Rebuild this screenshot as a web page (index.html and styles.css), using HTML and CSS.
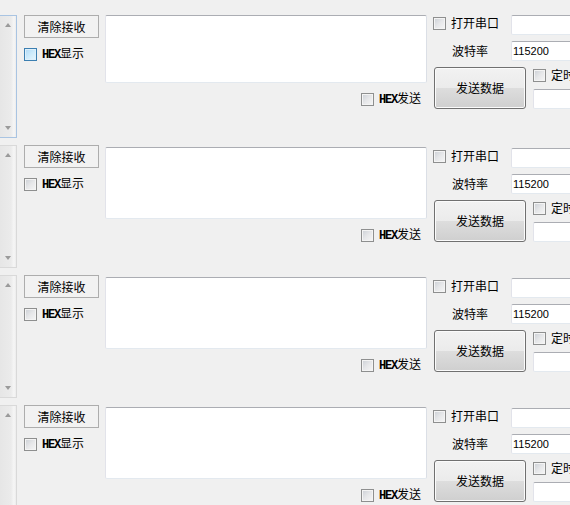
FILE: index.html
```html
<!DOCTYPE html>
<html lang="zh-CN">
<head>
<meta charset="utf-8">
<title>串口调试</title>
<link rel="stylesheet" href="styles.css">
</head>
<body>
<div class="form">

  <div class="panel compact">
    <div class="vscroll focus"><span class="arr up"></span><span class="arr down"></span></div>
    <div class="col-left">
      <button class="btn-flat">清除接收</button>
      <label class="chk"><span class="cb hot"></span><span class="lbl"><span class="hex">HEX</span>显示</span></label>
    </div>
    <div class="col-mid">
      <div class="memo"></div>
      <label class="chk"><span class="cb"></span><span class="lbl"><span class="hex">HEX</span>发送</span></label>
    </div>
    <div class="col-right">
      <div class="row r1"><label class="chk"><span class="cb"></span><span class="lbl">打开串口</span></label><div class="edit"></div></div>
      <div class="row r2"><span class="cap">波特率</span><div class="edit">115200</div></div>
      <div class="row r3"><button class="btn-send">发送数据</button>
        <div class="timer"><label class="chk"><span class="cb"></span><span class="lbl">定时</span></label><div class="edit"></div></div>
      </div>
    </div>
  </div>

  <div class="panel">
    <div class="vscroll"><span class="arr up"></span><span class="arr down"></span></div>
    <div class="col-left">
      <button class="btn-flat">清除接收</button>
      <label class="chk"><span class="cb"></span><span class="lbl"><span class="hex">HEX</span>显示</span></label>
    </div>
    <div class="col-mid">
      <div class="memo"></div>
      <label class="chk"><span class="cb"></span><span class="lbl"><span class="hex">HEX</span>发送</span></label>
    </div>
    <div class="col-right">
      <div class="row r1"><label class="chk"><span class="cb"></span><span class="lbl">打开串口</span></label><div class="edit"></div></div>
      <div class="row r2"><span class="cap">波特率</span><div class="edit">115200</div></div>
      <div class="row r3"><button class="btn-send">发送数据</button>
        <div class="timer"><label class="chk"><span class="cb"></span><span class="lbl">定时</span></label><div class="edit"></div></div>
      </div>
    </div>
  </div>

  <div class="panel">
    <div class="vscroll"><span class="arr up"></span><span class="arr down"></span></div>
    <div class="col-left">
      <button class="btn-flat">清除接收</button>
      <label class="chk"><span class="cb"></span><span class="lbl"><span class="hex">HEX</span>显示</span></label>
    </div>
    <div class="col-mid">
      <div class="memo"></div>
      <label class="chk"><span class="cb"></span><span class="lbl"><span class="hex">HEX</span>发送</span></label>
    </div>
    <div class="col-right">
      <div class="row r1"><label class="chk"><span class="cb"></span><span class="lbl">打开串口</span></label><div class="edit"></div></div>
      <div class="row r2"><span class="cap">波特率</span><div class="edit">115200</div></div>
      <div class="row r3"><button class="btn-send">发送数据</button>
        <div class="timer"><label class="chk"><span class="cb"></span><span class="lbl">定时</span></label><div class="edit"></div></div>
      </div>
    </div>
  </div>

  <div class="panel">
    <div class="vscroll"><span class="arr up"></span><span class="arr down"></span></div>
    <div class="col-left">
      <button class="btn-flat">清除接收</button>
      <label class="chk"><span class="cb"></span><span class="lbl"><span class="hex">HEX</span>显示</span></label>
    </div>
    <div class="col-mid">
      <div class="memo"></div>
      <label class="chk"><span class="cb"></span><span class="lbl"><span class="hex">HEX</span>发送</span></label>
    </div>
    <div class="col-right">
      <div class="row r1"><label class="chk"><span class="cb"></span><span class="lbl">打开串口</span></label><div class="edit"></div></div>
      <div class="row r2"><span class="cap">波特率</span><div class="edit">115200</div></div>
      <div class="row r3"><button class="btn-send">发送数据</button>
        <div class="timer"><label class="chk"><span class="cb"></span><span class="lbl">定时</span></label><div class="edit"></div></div>
      </div>
    </div>
  </div>

</div>
</body>
</html>
```
FILE: styles.css
```css
html, body {
  margin: 0;
  height: 100%;
  overflow: hidden;
}
body {
  background: #f0f0f0;
  color: #000;
  font: 12px/14px "Noto Sans CJK SC", "Liberation Sans", sans-serif;
}
.form {
  padding-top: 15px;
}
.panel {
  display: flex;
  align-items: flex-start;
  height: 130px;
  flex-shrink: 0;
}

/* scrollbar stub */
.vscroll {
  width: 16px;
  height: 107px;
  padding: 7px 0;
  border: 1px solid #d9d9d9;
  border-left: 0;
  background: linear-gradient(90deg, #e6e6e6 0, #ebebeb 11px, #f6f6f6 14px, #ececec 16px);
  display: flex;
  flex-direction: column;
  justify-content: space-between;
  align-items: center;
  flex-shrink: 0;
}
.vscroll.focus {
  border-color: #a9c4e2;
}
.arr {
  width: 0;
  height: 0;
  border-left: 3px solid transparent;
  border-right: 3px solid transparent;
}
.arr.up {
  border-bottom: 4px solid #9a9a9a;
}
.arr.down {
  border-top: 4px solid #9a9a9a;
}

/* left column */
.col-left {
  margin-left: 7px;
  width: 75px;
  flex-shrink: 0;
}
.btn-flat {
  display: block;
  width: 75px;
  height: 23px;
  padding: 0;
  box-sizing: border-box;
  border: 1px solid #adadad;
  background: #f2f2f2;
  font: inherit;
  line-height: 20px;
  color: #000;
}
.col-left .chk {
  margin-top: 8px;
}

/* checkbox */
.chk {
  display: flex;
  align-items: center;
  gap: 5px;
  white-space: nowrap;
}
.cb {
  display: block;
  width: 13px;
  height: 13px;
  box-sizing: border-box;
  border: 1px solid #8e8f8f;
  background: linear-gradient(135deg, #cbcfd5 0, #e6e7e9 50%, #f6f6f6 100%);
  box-shadow: inset 0 0 0 1px #f4f4f4;
  flex-shrink: 0;
}
.cb.hot {
  border-color: #3c7fb1;
  background: linear-gradient(135deg, #aed8f6 0, #cdebfb 50%, #e8f6fe 100%);
  box-shadow: inset 0 0 0 1px #def0fb;
}
.lbl {
  line-height: 14px;
}
.hex {
  font: bold 12px/14px "Liberation Mono", monospace;
  letter-spacing: -1.2px;
}

/* middle column */
.col-mid {
  margin-left: 6px;
  width: 322px;
  flex-shrink: 0;
}
.memo {
  margin-top: 2px;
  height: 72px;
  box-sizing: border-box;
  background: #fff;
  border: 1px solid;
  border-color: #abadb3 #dbdfe6 #e3e9ef #e2e3ea;
  border-radius: 2px;
}
.col-mid .chk {
  margin: 8px 0 0 256px;
}

/* right column */
.col-right {
  margin-left: 6px;
  flex-shrink: 0;
}
.row {
  display: flex;
  align-items: flex-start;
}
.r1 {
  margin-top: 3px;
}
.r1 .chk {
  width: 78px;
  margin-top: 1px;
}
.r2, .r3 {
  margin-top: 6px;
}
.cap {
  width: 59px;
  padding-left: 19px;
  line-height: 20px;
}
.edit {
  width: 90px;
  height: 20px;
  box-sizing: border-box;
  background: #fff;
  border: 1px solid;
  border-color: #abadb3 #dbdfe6 #e3e9ef #e2e3ea;
  border-radius: 2px;
  padding-left: 1px;
  font: 11px/18px "Liberation Sans", sans-serif;
}
.btn-send {
  margin-left: 1px;
  width: 92px;
  height: 42px;
  padding: 0;
  box-sizing: border-box;
  border: 1px solid #707070;
  border-radius: 3px;
  background: linear-gradient(#f2f2f2 0, #ebebeb 50%, #dddddd 51%, #cfcfcf 100%);
  box-shadow: inset 0 0 0 1px #fbfbfb;
  font: inherit;
  color: #000;
}
.timer {
  margin-left: 7px;
}
.timer .chk {
  margin-top: 1px;
}
.timer .edit {
  margin-top: 7px;
}

/* first panel is slightly compressed */
.compact .memo {
  margin-top: 0;
  height: 68px;
}
.compact .r1 {
  margin-top: 0;
}
```
